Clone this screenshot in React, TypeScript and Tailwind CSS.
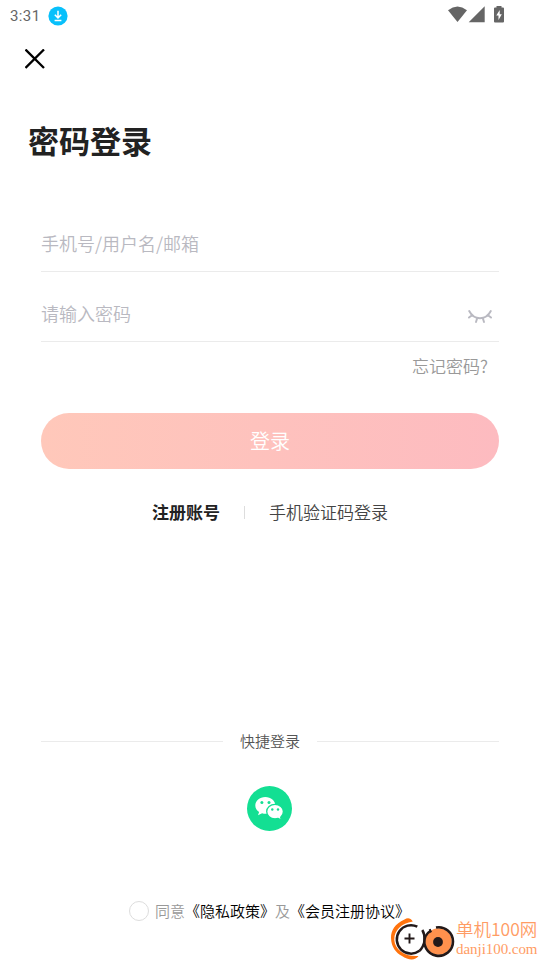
import React from "react";

const CloseIcon = () => (
  <svg className="block h-5 w-5" viewBox="0 0 20 20" fill="none" stroke="#000" strokeWidth="2.3">
    <path d="M.5.5 19 19M19 .5.5 19" />
  </svg>
);

function StatusBar() {
  return (
    <header className="flex h-8 items-center pl-[10px] pr-[35px]">
      <span className="font-['Roboto',sans-serif] text-[15px] font-normal leading-5 tracking-[0.4px] text-[#666]">3:31</span>
      <svg className="-mt-px ml-[7px] h-5 w-5" viewBox="0 0 20 20">
        <circle cx="10" cy="10" r="9.6" fill="#08c0fb" />
        <path d="M10 4.8v6.8M6.8 8.7l3.2 3.2 3.2-3.2M6.6 14.4h6.8" fill="none" stroke="#fff" strokeWidth="1.5" />
      </svg>
      <svg className="-mt-[3px] ml-auto h-[17px] w-[57px]" viewBox="0 0 57 17" fill="#656565">
        <path d="M0 4.2Q9.5-3 19 4.2L9.5 16Z" />
        <path d="M20.7 16.2 36.7.2v16Z" />
        <path d="M48.5 0h5v1.5H55q1 0 1 1V15.500q0 1-1 1h-8q-1 0-1-1V2.500q0-1 1-1h1.500Z" />
        <path d="m51.700 4-3.400 5.600h2.200V14l3.300-5.700h-2.100Z" fill="#fff" />
      </svg>
    </header>
  );
}

const ClosedEye = () => (
  <svg className="h-4 w-6" viewBox="0 0 24 16" fill="none" stroke="#b9b9c1" strokeWidth="1.900" strokeLinecap="round">
    <path d="M1.200 2C3.500 6.500 7 9.200 12 9.200S20.500 6.500 22.800 2M4.300 6 1 8.600M19.700 6 23 8.600M9.200 9.100 8 13M14.800 9.100 16 13" />
  </svg>
);

const WeChat = () => (
  <svg className="block h-[45px] w-[45px]" viewBox="0 0 45 45">
    <circle cx="22.500" cy="22.500" r="22.500" fill="#13df93" />
    <path d="M18.300 11C12.600 11 8.300 14.900 8.300 19.500c0 2.800 1.500 5 3.800 6.500L11 29.300l4.100-2q1.600.5 4 .5c5.300 0 9.300-3.900 9.300-8.300 0-4.800-4.500-8.500-10.100-8.500Z" fill="#fff" />
    <path d="M28 18.400c-4.700 0-8.300 3.200-8.300 7.200s3.600 7.200 8.300 7.200q1.700 0 3.100-.4l3.400 1.700-.8-2.900c1.700-1.300 2.700-3.300 2.700-5.600 0-4-3.700-7.200-8.400-7.200Z" fill="#fff" stroke="#13df93" strokeWidth="1.300" />
    <g fill="#13df93"><circle cx="14.900" cy="16.500" r="1.500" /><circle cx="22" cy="16.500" r="1.500" /><circle cx="25.300" cy="23.500" r="1.200" /><circle cx="31" cy="23.500" r="1.200" /></g>
  </svg>
);

function Watermark() {
  return (
    <div className="absolute left-[390px] top-[916px] flex h-[44px] w-[150px]">
      <svg className="h-[44px] w-[66px] shrink-0" viewBox="0 0 66 44" fill="none">
        <path d="M22.800 5.500C20.500 1.800 17.500 1.500 14.500 3.500C4.500 8 .8 15 1 22C1.200 31 6 37 12 40C18 44 25 45 28.500 40C15 41 5 34 4.300 24C4 14.500 11 7.500 22.800 5.500Z" fill="#ff730d" />
        <path d="M27.300 10.700A14.200 14.200 0 1 0 29.500 34.800" stroke="#231919" strokeWidth="2.500" />
        <path d="M32.300 14Q34.800 18 34.600 24.500Q33.500 31 29.500 34.800" stroke="#231919" strokeWidth="2.400" />
        <path d="M19.500 17.500v10M14.500 22.500h10" stroke="#231919" strokeWidth="1.900" />
        <circle cx="48.500" cy="25.500" r="13.300" fill="#ff914d" />
        <path d="M46 11.500A14.300 14.300 0 1 1 35.300 20.500Q37 17 41 14.500" stroke="#231919" strokeWidth="2.600" />
        <path d="M39.700 13.200 41 16.300" stroke="#231919" strokeWidth="2" />
        <circle cx="48" cy="26" r="4.900" fill="#231919" />
      </svg>
      <div className="flex flex-col whitespace-nowrap text-[#ff9c64]">
        <span className="mt-[2px] h-[23px] text-[17.500px] leading-[22px]">单机100网</span>
        <span className="font-['Liberation_Serif',serif] text-[15px] leading-[17px] tracking-[-0.05px]">danji100.com</span>
      </div>
    </div>
  );
}

export default function App() {
  return (
    <main className="relative flex h-[960px] w-[540px] flex-col overflow-hidden bg-white font-['Noto_Sans_CJK_SC',sans-serif] font-[350]">
      <StatusBar />
      <button className="ml-[25px] mt-[17px] h-5 w-5" aria-label="关闭"><CloseIcon /></button>
      <h1 className="ml-7 mt-[49px] h-[44px] text-[31px] font-bold leading-[44px] text-[#222]">密码登录</h1>

      <form className="mx-[41px] mt-[54px] flex flex-col">
        <div className="flex h-[56px] items-center border-b border-[#ebebeb] text-[18px] text-[#b9b9c1]">手机号/用户名/邮箱</div>
        <div className="mt-[14px] flex h-[56px] items-center justify-between border-b border-[#ebebeb] pr-[7px] text-[18px] text-[#b9b9c1]">
          <span>请输入密码</span>
          <span className="pt-[6px]"><ClosedEye /></span>
        </div>
        <a className="mr-[11px] mt-[12px] h-6 self-end text-[17px] leading-6 text-[#999]">忘记密码?</a>
        <button type="button" className="mt-[35px] h-[56px] rounded-full bg-linear-to-r from-[#ffc8ba] to-[#fdbbc0] text-[20px] text-white">登录</button>
      </form>

      <nav className="mt-[31px] flex h-6 items-center justify-center text-[17px] leading-6">
        <a className="font-bold text-[#222]">注册账号</a>
        <span className="mx-6 h-[13px] w-px bg-[#ddd]" />
        <a className="text-[#444]">手机验证码登录</a>
      </nav>

      <section className="mx-[41px] mt-[206px] flex flex-col items-center">
        <div className="flex h-[22px] w-full items-center gap-[17px] text-[15px] leading-[22px] text-[#555]">
          <span className="h-px flex-1 bg-[#ebebeb]" />
          <h2>快捷登录</h2>
          <span className="h-px flex-1 bg-[#ebebeb]" />
        </div>
        <button className="mr-px mt-[34px]" aria-label="微信登录"><WeChat /></button>
      </section>

      <footer className="ml-[129px] mt-[69px] flex h-[22px] items-center whitespace-nowrap text-[15px] leading-[22px] text-[#999]">
        <span className="mr-[6px] h-5 w-5 rounded-full border border-[#ddd]" />
        <p>同意<a className="text-black">《隐私政策》</a>及<a className="text-black">《会员注册协议》</a></p>
      </footer>
      <Watermark />
    </main>
  );
}
